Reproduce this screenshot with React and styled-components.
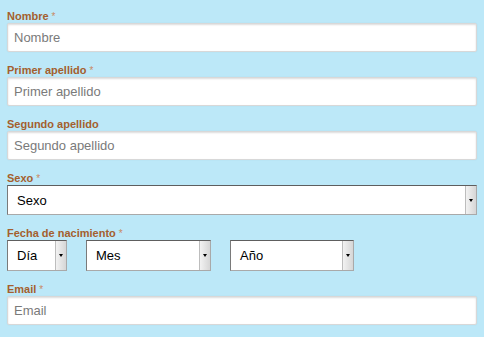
import React from "react";
import styled, { createGlobalStyle } from "styled-components";

const Global = createGlobalStyle`
  html, body { margin: 0; padding: 0; background: #bce8f8; }
  body { font-family: "Liberation Sans", Arial, sans-serif; }
`;

const Form = styled.form`
  width: 484px;
  height: 337px;
  box-sizing: border-box;
  padding: 9px 7px 0 7px;
  overflow: hidden;
`;

const Field = styled.div`
  display: flex;
  flex-direction: column;
  margin-bottom: ${(p) => p.$gap || 11}px;
`;

const Label = styled.label`
  display: block;
  height: 14px;
  line-height: 14px;
  font-size: 11px;
  font-weight: bold;
  color: #a45f2e;
`;

const Req = styled.span`
  color: #c98a64;
  font-weight: normal;
  font-size: 10px;
  margin-left: 3px;
`;

const Input = styled.input`
  box-sizing: border-box;
  width: 470px;
  height: 29px;
  border: 1px solid #d8d8d8;
  border-radius: 2px;
  background: #fff;
  box-shadow: inset 0 1px 2px rgba(0, 0, 0, 0.14), 0 0 2px rgba(0, 0, 0, 0.06);
  padding: 0 6px;
  font-family: "Liberation Sans", Arial, sans-serif;
  font-size: 13px;
  color: #333;
  outline: none;
  &::placeholder { color: #7a7a7a; }
`;

const SelectBox = styled.div`
  box-sizing: border-box;
  display: flex;
  align-items: stretch;
  width: ${(p) => p.$w}px;
  height: ${(p) => p.$h}px;
  background: #fff;
  border: 1px solid #a9a9a9;
  border-top-color: #5e5e5e;
  border-left-color: #7a7a7a;
`;

const SelectText = styled.div`
  flex: 1;
  display: flex;
  align-items: center;
  padding-left: 9px;
  font-size: 13px;
  color: #000;
`;

const Arrow = styled.div`
  width: 10px;
  display: flex;
  align-items: center;
  justify-content: center;
  background: linear-gradient(to right, #f2f2f2, #d6d6d6);
  border-left: 1px solid #bdbdbd;
  &::after {
    content: "";
    border-left: 2.5px solid transparent;
    border-right: 2.5px solid transparent;
    border-top: 3px solid #000;
  }
`;

const DateRow = styled.div`
  display: flex;
  gap: 19px;
`;

function Select({ text, w, h = 29 }) {
  return (
    <SelectBox $w={w} $h={h}>
      <SelectText>{text}</SelectText>
      <Arrow />
    </SelectBox>
  );
}

export default function App() {
  return (
    <>
      <Global />
      <Form>
        <Field>
          <Label>Nombre<Req>*</Req></Label>
          <Input placeholder="Nombre" />
        </Field>
        <Field>
          <Label>Primer apellido<Req>*</Req></Label>
          <Input placeholder="Primer apellido" />
        </Field>
        <Field>
          <Label>Segundo apellido</Label>
          <Input placeholder="Segundo apellido" />
        </Field>
        <Field>
          <Label>Sexo<Req>*</Req></Label>
          <Select text="Sexo" w={470} h={30} />
        </Field>
        <Field $gap={11}>
          <Label>Fecha de nacimiento<Req>*</Req></Label>
          <DateRow>
            <Select text="Día" w={60} h={31} />
            <Select text="Mes" w={125} h={31} />
            <Select text="Año" w={124} h={31} />
          </DateRow>
        </Field>
        <Field>
          <Label>Email<Req>*</Req></Label>
          <Input placeholder="Email" />
        </Field>
      </Form>
    </>
  );
}
